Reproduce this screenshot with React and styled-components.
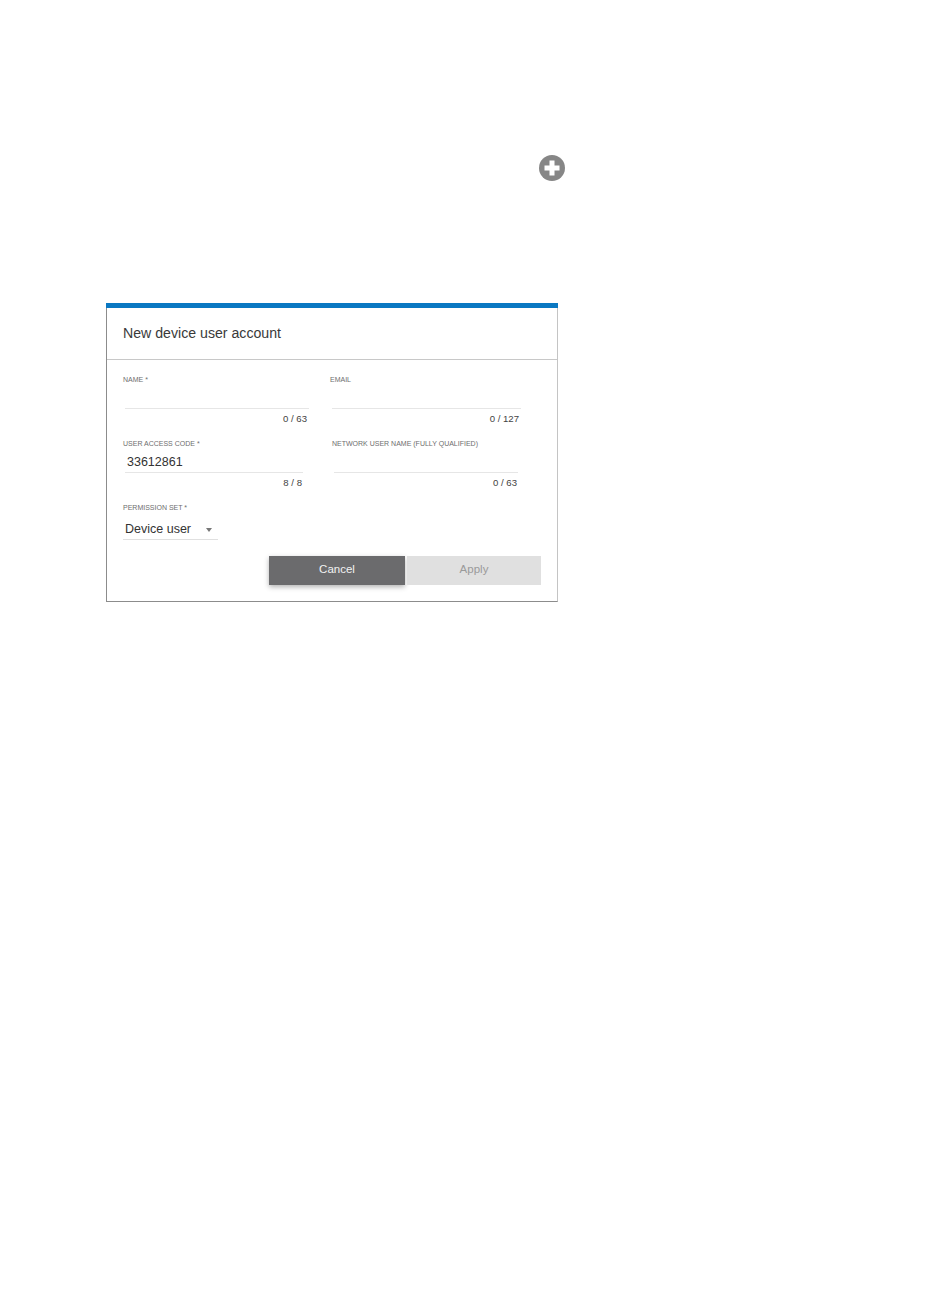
import { createGlobalStyle, styled } from "styled-components";

const GlobalStyle = createGlobalStyle`
    html, body {
        margin: 0;
        padding: 0;
        background: #fff;
        font-family: "Liberation Sans", Arial, sans-serif;
    }
`;

const Page = styled.div`
    width: 950px;
    height: 1299px;
    padding: 155px 0 0 106px;
    box-sizing: border-box;
`;

const AddRow = styled.div`
    display: flex;
    justify-content: flex-end;
    width: 459px;
    height: 26px;
    margin-bottom: 122px;
`;

const Dialog = styled.div`
    width: 452px;
    height: 299px;
    box-sizing: border-box;
    border: 1px solid #8c8c8c;
    border-top: 0;
    border-right-color: #c4c4c4;
    display: flex;
    flex-direction: column;
`;

const TopBar = styled.div`
    height: 5px;
    margin: 0 -1px;
    background: #0a78c2;
`;

const Header = styled.div`
    height: 49px;
    padding: 0 0 2px 16px;
    display: flex;
    align-items: center;
    border-bottom: 1px solid #c8c8c8;
    font-size: 14.15px;
    color: #3a3a3a;
`;

const Form = styled.div`
    padding: 16px 16px 0;
    display: grid;
    grid-template-columns: 207px 1fr;
    grid-auto-rows: 64px;
`;

const Field = styled.div`
    padding-left: ${({ $indent }) => $indent || 0}px;
`;

const Label = styled.div`
    font-size: 7px;
    line-height: 8px;
    height: 8px;
    color: #6e6e6e;
    white-space: nowrap;
`;

const Value = styled.div`
    height: 20px;
    margin-top: 4px;
    padding-left: ${({ $indent }) => $indent || 0}px;
    font-size: 12.5px;
    line-height: 20px;
    color: #333;
`;

const Underline = styled.div`
    width: ${({ $width }) => $width}px;
    margin-left: ${({ $offset }) => $offset || 0}px;
    border-top: 1px solid #e6e6e6;
`;

const Counter = styled.div`
    width: ${({ $width }) => $width}px;
    margin-top: 4px;
    text-align: right;
    font-size: 9.6px;
    line-height: 12px;
    color: #444;
`;

const SelectBox = styled.div`
    width: 95px;
    height: 21px;
    margin-top: 7px;
    padding: 0 6px 0 2px;
    box-sizing: border-box;
    display: flex;
    align-items: center;
    justify-content: space-between;
    border-bottom: 1px solid #e0e0e0;
    font-size: 12.5px;
    color: #333;
`;

const Caret = styled.span`
    width: 0;
    height: 0;
    margin-top: 1px;
    border-left: 3.5px solid transparent;
    border-right: 3.5px solid transparent;
    border-top: 4px solid #777;
`;

const Actions = styled.div`
    display: flex;
    justify-content: flex-end;
    gap: 2px;
    padding-right: 16px;
    margin-top: -12px;
`;

const ActionButton = styled.div`
    width: ${({ $width }) => $width}px;
    height: 29px;
    padding-bottom: 3px;
    box-sizing: border-box;
    display: flex;
    align-items: center;
    justify-content: center;
    font-size: 11.5px;
    background: ${({ $primary }) => ($primary ? "#6b6b6d" : "#e0e0e0")};
    color: ${({ $primary }) => ($primary ? "#f2f2f2" : "#9a9a9a")};
    box-shadow: ${({ $primary }) => ($primary ? "0 2px 5px rgba(0, 0, 0, 0.3)" : "none")};
`;

function AddIcon() {
    return (
        <svg width="26" height="26" viewBox="0 0 26 26">
            <circle cx="13" cy="13" r="13" fill="#868686" />
            <path d="M10.5 5.5h5v5h5v5h-5v5h-5v-5h-5v-5h5z" fill="#fff" />
        </svg>
    );
}

function App() {
    return (
        <Page>
            <GlobalStyle />
            <AddRow>
                <AddIcon />
            </AddRow>
            <Dialog>
                <TopBar />
                <Header>New device user account</Header>
                <Form>
                    <Field>
                        <Label>NAME *</Label>
                        <Value />
                        <Underline $width={184} $offset={2} />
                        <Counter $width={184}>0 / 63</Counter>
                    </Field>
                    <Field>
                        <Label>EMAIL</Label>
                        <Value />
                        <Underline $width={189} $offset={2} />
                        <Counter $width={189}>0 / 127</Counter>
                    </Field>
                    <Field>
                        <Label>USER ACCESS CODE *</Label>
                        <Value $indent={4}>33612861</Value>
                        <Underline $width={178} $offset={2} />
                        <Counter $width={179}>8 / 8</Counter>
                    </Field>
                    <Field $indent={2}>
                        <Label>NETWORK USER NAME (FULLY QUALIFIED)</Label>
                        <Value />
                        <Underline $width={184} $offset={2} />
                        <Counter $width={185}>0 / 63</Counter>
                    </Field>
                    <Field>
                        <Label>PERMISSION SET *</Label>
                        <SelectBox>
                            Device user
                            <Caret />
                        </SelectBox>
                    </Field>
                </Form>
                <Actions>
                    <ActionButton $primary $width={136}>Cancel</ActionButton>
                    <ActionButton $width={134}>Apply</ActionButton>
                </Actions>
            </Dialog>
        </Page>
    );
}

export default App;
